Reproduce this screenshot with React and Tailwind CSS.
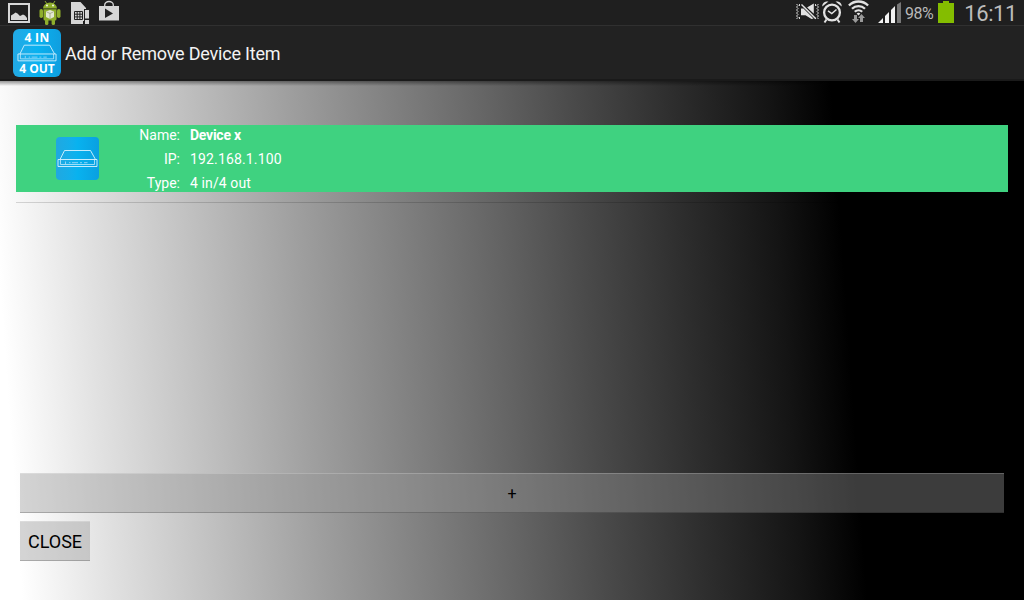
function PictureIcon() {
  return (
    <svg className="w-[22px] h-[25px] shrink-0" viewBox="0 0 22 25" fill="none">
      <rect x="1" y="4" width="20" height="18" stroke="#d6d6d6" strokeWidth="2" />
      <path d="M3 20v-4.500L5.500 14 7.500 12.500l2 1 2.500 2.500 3-1.500 2 1 2 2.500v2z" fill="#d6d6d6" />
    </svg>
  )
}

function AndroidIcon() {
  return (
    <svg className="w-[22px] h-[25px] shrink-0" viewBox="0 0 22 25">
      <g fill="#8fae2c">
        <path d="M4 8.500a7 6 0 0 1 14 0z" />
        <path d="M6 1l2 3M16 1l-2 3" stroke="#8fae2c" strokeWidth="1" />
        <rect x="0.500" y="9" width="3.500" height="9" rx="1.700" />
        <rect x="18" y="9" width="3.500" height="9" rx="1.700" />
        <path d="M4.500 9.200h13V19a1.500 1.500 0 0 1-1.500 1.500H6A1.500 1.500 0 0 1 4.500 19z" />
        <rect x="6" y="19" width="3.400" height="6" rx="1.600" />
        <rect x="12.600" y="19" width="3.400" height="6" rx="1.600" />
      </g>
      <circle cx="8" cy="5.500" r="0.900" fill="#fff" />
      <circle cx="14" cy="5.500" r="0.900" fill="#fff" />
      <path d="M7 11.500l4-1.500 4 1.500v5.500l-4 2-4-2z" fill="#e3e8d2" />
      <path d="M7.500 11.800l3.500 1.700 3.500-1.700M11 13.500V19" stroke="#9a9f83" strokeWidth="0.800" fill="none" />
    </svg>
  )
}

function SimIcon() {
  return (
    <svg className="w-[19px] h-[25px] shrink-0" viewBox="0 0 19 25">
      <path d="M0 2h9.500l5.500 6v1h-2v12h-1v3H0z" fill="#d6d6d6" />
      <path d="M3.500 11.500h8v8h-8zM6.200 11.500v8M8.900 11.500v8M3.500 14.200h8M3.500 16.900h8" stroke="#222" strokeWidth="1" fill="none" />
      <path d="M13 9h6v16h-6z" fill="#222" />
      <path d="M14 10h4v8.500h-4zM14 20h4v4h-4z" fill="#d6d6d6" />
    </svg>
  )
}

function PlayStoreIcon() {
  return (
    <svg className="w-[20px] h-[25px] shrink-0" viewBox="0 0 20 25">
      <path d="M5.700 6.500V5a4.300 3.500 0 0 1 8.600 0v1.500" stroke="#d6d6d6" strokeWidth="1.300" fill="none" />
      <path d="M0 6h20v14.500H0z" fill="#d6d6d6" />
      <path d="M6 8.500l8 5L6 18z" fill="#222" />
    </svg>
  )
}

function MuteIcon() {
  return (
    <svg className="w-[23px] h-[25px] shrink-0" viewBox="0 0 23 25">
      <path d="M.5 4l1.500 1.500L.5 7 2 8.500.5 10 2 11.500.5 13 2 14.500.5 16 2 17.500.5 19M3.500 4v2M3.500 17v2M22.500 4L21 5.500 22.500 7 21 8.500l1.500 1.500-1.500 1.500 1.500 1.500-1.500 1.500 1.500 1.500-1.500 1.500 1.500 1.500M19.500 4v2M19.500 17v2" stroke="#d6d6d6" strokeWidth="1" fill="none" />
      <path d="M5 8.500h2.500L17.500 18.500 15.500 19l-6-3.800H5zM11 7.500L17.800 3.500v10.300z" fill="#e2e2e2" />
      <path d="M6.500 4L21 18.500" stroke="#1f1f1f" strokeWidth="1.200" />
      <path d="M5.500 4.500L19.800 18.800" stroke="#e2e2e2" strokeWidth="1.500" />
    </svg>
  )
}

function AlarmIcon() {
  return (
    <svg className="w-[20px] h-[25px] shrink-0" viewBox="0 0 20 25" fill="none" stroke="#e2e2e2">
      <circle cx="10" cy="12.500" r="7.900" strokeWidth="2.300" />
      <path d="M6 10.800l3.800 2.700L14.500 9.500" strokeWidth="1.500" />
      <path d="M4.500 19.500L2.500 22.500M15.500 19.500l2 3" strokeWidth="2" />
      <path d="M0.300 6.500C0 3 3 .7 6.500 1.600zM19.700 6.500C20 3 17 .7 13.500 1.600z" fill="#e2e2e2" stroke="none" />
    </svg>
  )
}

function WifiIcon() {
  return (
    <svg className="w-[21px] h-[25px] shrink-0" viewBox="0 0 21 25">
      <g fill="none" stroke="#e2e2e2" strokeWidth="2.300">
        <path d="M0.900 5.500a13.500 13.500 0 0 1 19.200 0" />
        <path d="M4 8.800a9.300 9.300 0 0 1 13 0" />
        <path d="M6.800 11.800a5.300 5.300 0 0 1 7.400 0" />
      </g>
      <path d="M8.600 13.600a2.800 2.800 0 0 1 3.800 0l-1.900 2z" fill="#e2e2e2" />
      <path d="M6 15h3v4h2l-3.500 4L4 19h2zM12 22v-4h-2l3.500-4 3.500 4h-2v4z" fill="#999" />
    </svg>
  )
}

function SignalIcon() {
  return (
    <svg className="w-[23px] h-[25px] shrink-0" viewBox="0 0 23 25">
      <path d="M0 23l5-5V23zM7 23v-7l4-4v11zM13 23V10l4-4v17z" fill="#f2f2f2" />
      <path d="M19 23V4.500L23 2v21z" fill="#777" />
    </svg>
  )
}

function RackUnit({ className }) {
  return (
    <svg className={className} viewBox="0 0 43 43" fill="none" stroke="#d9f3ff">
      <path d="M4 22.500L8.500 13.500h26l5 9" strokeWidth="0.900" />
      <path d="M2 22.500h39v7H2z" strokeWidth="0.900" />
      <path d="M4.500 22.500v5h34v-5" strokeWidth="0.700" />
      <path d="M9.500 24.500v2.500M13 25.700h1.500M16 25.700h6M24 25.700h2M28 25.700h3.500" strokeWidth="1" stroke="#8fd6f7" />
    </svg>
  )
}

const device = [
  { label: 'Name:', value: 'Device x', style: 'font-bold tracking-[-0.25px]' },
  { label: 'IP:', value: '192.168.1.100', style: 'tracking-[0.15px]' },
  { label: 'Type:', value: '4 in/4 out', style: 'tracking-[0.1px]' },
]

function StatusBar() {
  return (
    <div className="flex h-[26px] items-start justify-between border-b border-[#303030] bg-[#1f1f1f] pl-2 pr-[7px]">
      <div className="flex">
        <PictureIcon />
        <div className="ml-[9px] flex"><AndroidIcon /></div>
        <div className="ml-[10px] flex"><SimIcon /></div>
        <div className="ml-[9px] flex"><PlayStoreIcon /></div>
      </div>
      <div className="flex text-[#c8c8c8]">
        <MuteIcon />
        <div className="ml-[3px] flex"><AlarmIcon /></div>
        <div className="ml-[6px] flex"><WifiIcon /></div>
        <div className="ml-[9px] flex"><SignalIcon /></div>
        <span className="ml-[4px] w-[33px] pt-px text-[16px] leading-[25px] tracking-[-0.5px] whitespace-nowrap text-[#b8b8b8]">98%</span>
        <svg className="h-[25px] w-4 shrink-0" viewBox="0 0 16 25">
          <path d="M0 3h5V1h6v2h5v20H0z" fill="#84bd00" />
        </svg>
        <span className="ml-[10px] w-[53px] pt-px text-right text-[22px] leading-[25px] tracking-[-0.4px] whitespace-nowrap text-[#bcbcbc]">16:11</span>
      </div>
    </div>
  )
}

export default function App() {
  return (
    <div className="flex h-[600px] w-[1024px] flex-col overflow-hidden bg-black font-['Roboto',sans-serif]">
      <StatusBar />

      {/* Action bar */}
      <header className="flex h-[55px] items-center border-b-2 border-[#1a1a1a] bg-[#222] pl-[13px]">
        <div className="flex h-12 w-12 flex-col items-center justify-between rounded-md bg-linear-to-r from-[#22a9e4] via-[#08b2f0] to-[#109edf] font-['Open_Sans',sans-serif] text-[12px] leading-[14px] font-bold text-white">
          <span className="mt-[2px] tracking-[0.3px]">4 IN</span>
          <RackUnit className="-my-5 h-[46px] w-[42px] shrink-0" />
          <span className="mb-[1px]">4 OUT</span>
        </div>
        <h1 className="ml-1 pt-[2px] text-[18px] tracking-[-0.2px] text-[#f3f3f3]">Add or Remove Device Item</h1>
      </header>

      <main className="flex flex-1 flex-col bg-[linear-gradient(86deg,#fff_22px,#e1e1e1_112px,#c3c3c3_208px,#9f9f9f_322px,#818181_423px,#636363_525px,#4a4a4a_606px,#2e2e2e_704px,#141414_802px,#000_865px)]">
        <div className="-mb-[5px] h-[5px] bg-linear-to-b from-black/40 to-transparent" />
        <div className="mx-4 mt-11 flex h-[67px] items-center bg-[#3fd280]">
          <div className="ml-10 h-[43px] w-[43px] rounded-[4px] bg-linear-to-r from-[#20a8e0] via-[#08b2ef] to-[#0aa0e0]">
            <RackUnit className="h-[43px] w-[43px]" />
          </div>
          <div className="ml-[31px] text-[14px] leading-6 text-white">
            {device.map(row => (
              <div key={row.label} className="flex">
                <span className="w-[50px] text-right">{row.label}</span>
                <span className={`ml-[10px] ${row.style}`}>{row.value}</span>
              </div>
            ))}
          </div>
        </div>
        <div className="mx-4 mt-[10px] h-px bg-black/15" />

        <div className="mt-auto mb-[39px] flex flex-col items-start gap-2 px-5">
          <button className="h-10 w-full border-t border-b border-t-white/20 border-b-black/20 bg-[#969696]/40 pt-[2px] text-[16px] text-black">
            +
          </button>
          <button className="h-10 w-[70px] border-t border-b border-t-white/20 border-b-black/20 bg-[#969696]/40 text-[18px] text-black">
            CLOSE
          </button>
        </div>
      </main>
    </div>
  )
}
